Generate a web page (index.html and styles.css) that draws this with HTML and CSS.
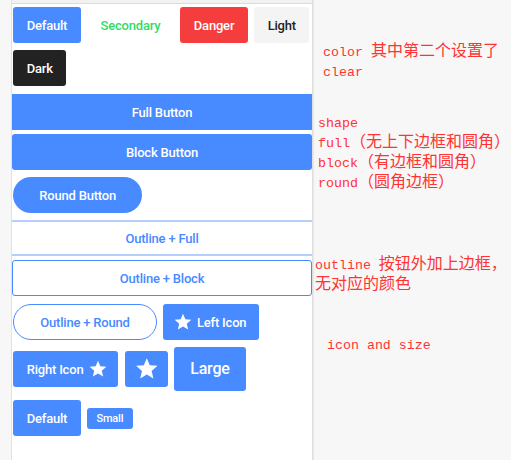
FILE: index.html
```html
<!DOCTYPE html>
<html lang="zh-CN">
<head>
<meta charset="utf-8">
<title>Buttons</title>
<link rel="stylesheet" href="styles.css">
</head>
<body>
<div class="page">
  <main class="panel">
    <div class="topbar"></div>
    <div class="stack">
      <div class="row row-colors">
        <button class="btn">Default</button>
        <button class="btn btn-clear-secondary">Secondary</button>
        <button class="btn btn-danger">Danger</button>
        <button class="btn btn-light">Light</button>
      </div>
      <div class="row mt-7">
        <button class="btn btn-dark">Dark</button>
      </div>

      <button class="btn btn-full mt-8">Full Button</button>
      <button class="btn btn-block mt-4">Block Button</button>
      <div class="row mt-7">
        <button class="btn btn-round">Round Button</button>
      </div>

      <button class="btn btn-outline btn-full mt-7">Outline + Full</button>
      <button class="btn btn-outline btn-block mt-4">Outline + Block</button>
      <div class="row mt-8">
        <button class="btn btn-outline btn-round">Outline + Round</button>
        <button class="btn btn-icon-left">
          <svg class="ico" viewBox="0 0 24 24"><path d="M12 17.27L18.18 21l-1.64-7.03L22 9.24l-7.19-.61L12 2 9.19 8.63 2 9.24l5.46 4.73L5.82 21z"/></svg>
          <span>Left Icon</span>
        </button>
      </div>

      <div class="row mt-7">
        <button class="btn btn-icon-right">
          <span>Right Icon</span>
          <svg class="ico" viewBox="0 0 24 24"><path d="M12 17.27L18.18 21l-1.64-7.03L22 9.24l-7.19-.61L12 2 9.19 8.63 2 9.24l5.46 4.73L5.82 21z"/></svg>
        </button>
        <button class="btn btn-icon-only">
          <svg class="ico ico-lg" viewBox="0 0 24 24"><path d="M12 17.27L18.18 21l-1.64-7.03L22 9.24l-7.19-.61L12 2 9.19 8.63 2 9.24l5.46 4.73L5.82 21z"/></svg>
        </button>
        <button class="btn btn-large">Large</button>
      </div>

      <div class="row mt-9">
        <button class="btn">Default</button>
        <button class="btn btn-small">Small</button>
      </div>
    </div>
  </main>

  <aside class="notes">
    <div class="note note-color">
      <span class="line"><span class="mono">color </span>其中第二个设置了</span>
      <span class="line"><span class="mono">clear</span></span>
    </div>
    <div class="note note-shape">
      <span class="line"><span class="mono">shape</span></span>
      <span class="line"><span class="mono">full</span>（无上下边框和圆角）</span>
      <span class="line"><span class="mono">block</span>（有边框和圆角）</span>
      <span class="line"><span class="mono">round</span>（圆角边框）</span>
    </div>
    <div class="note note-outline">
      <span class="line"><span class="mono">outline </span>按钮外加上边框，</span>
      <span class="line">无对应的颜色</span>
    </div>
    <div class="note note-icon">
      <span class="line"><span class="mono">icon and size</span></span>
    </div>
  </aside>
</div>
</body>
</html>
```

FILE: styles.css
```css
* { box-sizing: border-box; }

html, body {
  margin: 0;
  padding: 0;
  background: #f7f7f7;
  height: 100%;
  overflow: hidden;
}

.page {
  display: flex;
  align-items: flex-start;
  height: 460px;
}

.panel {
  margin-left: 11px;
  width: 302px;
  height: 460px;
  background: #fff;
  border-left: 1px solid #e2e2e2;
  border-right: 1px solid #dedede;
  box-shadow: 1px 0 1px rgba(0,0,0,0.05);
  flex: none;
}

.topbar {
  height: 4px;
  background: #f2f2f2;
  border-bottom: 1px solid #dcdcdc;
}

.stack {
  display: flex;
  flex-direction: column;
  align-items: stretch;
}

.row {
  display: flex;
  align-items: center;
  gap: 6.6px;
  padding-left: 1.3px;
}

.btn {
  display: inline-flex;
  align-items: center;
  justify-content: center;
  height: 36px;
  margin: 0;
  padding: 0 13.4px;
  border: 0;
  border-radius: 3px;
  background: #488aff;
  color: #fff;
  font-family: Roboto, "Noto Sans", sans-serif;
  font-weight: 500;
  font-size: 13px;
  letter-spacing: -0.2px;
  line-height: 1;
  white-space: nowrap;
  flex: none;
}

.btn-clear-secondary {
  background: transparent;
  color: #32db64;
}

.btn-danger { background: #f53d3d; }

.btn-light {
  background: #f4f4f4;
  color: #222;
}

.btn-dark { background: #222; }

.btn-full {
  width: 100%;
  border-radius: 0;
}

.btn-block {
  width: 100%;
}

.btn-round {
  border-radius: 40px;
  padding: 0 26px;
}

.btn-outline {
  background: #fff;
  color: #488aff;
  border: 1px solid #488aff;
}

.btn-outline.btn-full {
  border-left: 0;
  border-right: 0;
  border-top: 2px solid #b5cffc;
  border-bottom: 2px solid #b5cffc;
}

.btn-outline.btn-round {
  padding: 0 26px;
}

.ico {
  width: 20px;
  height: 20px;
  fill: currentColor;
  flex: none;
}

.ico-lg {
  width: 25.6px;
  height: 25.6px;
}

.btn-icon-left {
  padding: 0 13px 0 10px;
}
.btn-icon-left .ico { margin-right: 3.7px; }

.btn-icon-right {
  padding: 0 10px 0 13.4px;
}
.btn-icon-right .ico { margin-left: 5px; }

.btn-icon-only {
  padding: 0 8.5px;
}

.btn-large {
  height: 44px;
  font-size: 16px;
  padding: 0 16px;
}

.btn-small {
  height: 21px;
  font-size: 11px;
  padding: 0 9.3px;
}

.row-colors { margin-top: 3px; }
.mt-4 { margin-top: 4px; }
.mt-7 { margin-top: 7px; }
.mt-8 { margin-top: 8px; }
.mt-9 { margin-top: 9px; }

.notes {
  flex: 1;
  display: flex;
  flex-direction: column;
  align-items: flex-start;
}

.note {
  color: #f33;
  font-family: "Liberation Mono", "Noto Sans CJK SC", monospace;
  font-size: 16px;
  white-space: nowrap;
}

.line {
  display: block;
  height: 20px;
  line-height: 20px;
}

.mono {
  font-family: "Liberation Mono", "DejaVu Sans Mono", monospace;
  font-size: 13.3px;
  white-space: pre;
}

.note-color { margin-top: 41.7px; margin-left: 10px; }
.note-shape { margin-top: 31.3px; margin-left: 5px; }
.note-outline { margin-top: 62.5px; margin-left: 2px; }
.note-icon { margin-top: 39.5px; margin-left: 14px; }
```
